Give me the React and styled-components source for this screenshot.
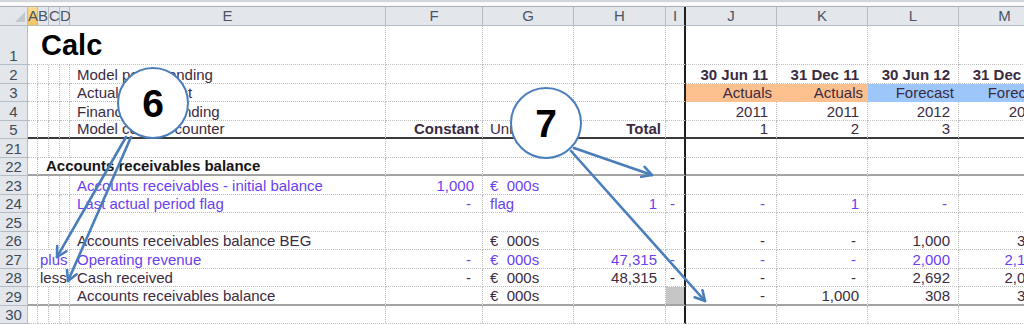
import React from 'react'
import styled, { createGlobalStyle } from 'styled-components'

const COLS = [28, 10, 11, 11, 10, 316, 97, 91, 92, 20, 91, 91, 91, 92]
const LETTERS = ['', 'A', 'B', 'C', 'D', 'E', 'F', 'G', 'H', 'I', 'J', 'K', 'L', 'M']
const TEMPLATE = COLS.map(w => w + 'px').join(' ')

const INK = '#3a2b3f'
const BLUE = '#6a3ff2'
const ORANGE = '#fcc08f'
const SKY = '#9dc6fb'
const ARROW = '#4a7ebb'

// little helpers so the row table stays readable
const label = (t, color = INK) => ({ c: 5, t, pad: 7, color })
const num = (c, t, color = INK) => ({ c, t, align: 'right', pad: 8, color })
const dash = (c, color = INK) => ({ c, t: '-', align: 'right', pad: 11, color })
const unit = (t, color = INK) => ({ c: 7, t, pad: 7, color })

const rows = [
  { n: 1, h: 39, cells: [{ c: 1, span: 5, t: 'Calc', pad: 13, big: true }] },
  { n: 2, cells: [
    label('Model period ending'),
    { ...num(10, '30 Jun 11'), bold: true }, { ...num(11, '31 Dec 11'), bold: true },
    { ...num(12, '30 Jun 12'), bold: true }, { ...num(13, '31 Dec 12'), bold: true },
  ] },
  { n: 3, cells: [
    label('Actuals / forecast'),
    { c: 10, t: 'Actuals', align: 'right', pad: 4, bg: ORANGE },
    { c: 11, t: 'Actuals', align: 'right', pad: 4, bg: ORANGE },
    { c: 12, t: 'Forecast', align: 'right', pad: 4, bg: SKY },
    { c: 13, t: 'Forecast', align: 'right', pad: 4, bg: SKY },
  ] },
  { n: 4, cells: [label('Financial year ending'), num(10, '2011'), num(11, '2011'), num(12, '2012'), num(13, '2012')] },
  { n: 5, rule: '#3a3a3a', cells: [
    label('Model column counter'),
    { c: 6, t: 'Constant', align: 'right', pad: 3, bold: true },
    unit('Units'),
    { c: 8, t: 'Total', align: 'right', pad: 4, bold: true },
    num(10, '1'), num(11, '2'), num(12, '3'), num(13, '4'),
  ] },
  { n: 21, cells: [] },
  { n: 22, rule: '#a3a3a3', cells: [{ c: 2, span: 4, t: 'Accounts receivables balance', pad: 8, bold: true, color: '#161616' }] },
  { n: 23, cells: [label('Accounts receivables - initial balance', BLUE), num(6, '1,000', BLUE), unit('€  000s', BLUE)] },
  { n: 24, cells: [
    label('Last actual period flag', BLUE), dash(6, BLUE), unit('flag', BLUE), num(8, '1', BLUE),
    { c: 9, t: '-', pad: 4, color: BLUE }, dash(10, BLUE), num(11, '1', BLUE), dash(12, BLUE), dash(13, BLUE),
  ] },
  { n: 25, cells: [] },
  { n: 26, cells: [label('Accounts receivables balance BEG'), unit('€  000s'), dash(10), dash(11), num(12, '1,000'), num(13, '308')] },
  { n: 27, cells: [
    { c: 2, span: 3, t: 'plus', pad: 2, color: BLUE },
    label('Operating revenue', BLUE), dash(6, BLUE), unit('€  000s', BLUE), num(8, '47,315', BLUE),
    { c: 9, t: '-', pad: 4, color: BLUE }, dash(10, BLUE), dash(11, BLUE), num(12, '2,000', BLUE), num(13, '2,100', BLUE),
  ] },
  { n: 28, cells: [
    { c: 2, span: 3, t: 'less', pad: 2 },
    label('Cash received'), dash(6), unit('€  000s'), num(8, '48,315'),
    { c: 9, t: '-', pad: 4 }, dash(10), dash(11), num(12, '2,692'), num(13, '2,092'),
  ] },
  { n: 29, rule: '#a3a3a3', cells: [
    label('Accounts receivables balance'), unit('€  000s'), { c: 9, t: '', bg: '#c6c6c6' },
    dash(10), num(11, '1,000'), num(12, '308'), num(13, '316'),
  ] },
  { n: 30, cells: [] },
]

function arrowHead(x1, y1, x2, y2, len = 11, spread = 0.5) {
  const a = Math.atan2(y2 - y1, x2 - x1)
  const p = s => `${x2 - len * Math.cos(a + s)},${y2 - len * Math.sin(a + s)}`
  return `${p(spread)} ${x2},${y2} ${p(-spread)}`
}

const arrows = [
  [126, 137, 57, 257],
  [131, 137, 68, 281],
  [574, 148, 652, 175],
  [571, 151, 705, 301],
]

export default function App() {
  return (
    <>
      <Global />
      <Page>
        <TopStrip />
        <Sheet>
          <HeaderRow>
            <Corner />
            {LETTERS.slice(1).map((l, i) => (
              <ColHead key={l} $selected={l === 'A'} $freeze={i + 1 === 9}>{l}</ColHead>
            ))}
          </HeaderRow>
          {rows.map((row, idx) => (
            <SheetRow key={row.n} row={row} h={row.h || (idx % 2 === 1 ? 19 : 18)} />
          ))}
        </Sheet>

        <Arrows width="1024" height="324" viewBox="0 0 1024 324">
          {arrows.map(([x1, y1, x2, y2], i) => (
            <g key={i}>
              <line x1={x1} y1={y1} x2={x2} y2={y2} />
              <polyline points={arrowHead(x1, y1, x2, y2)} />
            </g>
          ))}
        </Arrows>
        <Callout style={{ left: 117, top: 67 }}>6</Callout>
        <Callout style={{ left: 510, top: 87 }}>7</Callout>
      </Page>
    </>
  )
}

function SheetRow({ row, h }) {
  let out = []
  let col = 1
  while (col <= 13) {
    const cell = row.cells.find(c => c.c === col)
    const span = cell?.span || 1
    const last = col + span - 1
    out.push(
      <Cell
        key={col}
        $span={span}
        $freeze={last === 9}
        $rule={row.rule}
        $bg={cell?.bg}
        $align={cell?.align}
        $pad={cell?.pad || 0}
        $bold={cell?.bold}
        $big={cell?.big}
        $color={cell?.color}
      >
        {cell?.t}
      </Cell>
    )
    col += span
  }
  return (
    <Row $h={h}>
      <RowHead>{row.n}</RowHead>
      {out}
    </Row>
  )
}

const Global = createGlobalStyle`
  html, body {
    margin: 0;
    padding: 0;
    background: #ffffff;
    overflow: hidden;
  }
  body {
    font-family: "Liberation Sans", Arial, sans-serif;
  }
`

const Page = styled.div`
  position: relative;
  width: 1024px;
  height: 324px;
  overflow: hidden;
`

const TopStrip = styled.div`
  height: 7px;
  box-sizing: border-box;
  background: #fafafa;
  border-top: 2px solid #d3d6da;
  border-bottom: 1px solid #a9afb7;
`

const Sheet = styled.div`
  width: 1051px;
`

const HeaderRow = styled.div`
  display: grid;
  grid-template-columns: ${TEMPLATE};
  height: 19px;
`

const Corner = styled.div`
  position: relative;
  box-sizing: border-box;
  background: #e3e7ec;
  border-right: 1px solid #b6bcc5;
  border-bottom: 1px solid #b6bcc5;

  &::after {
    content: '';
    position: absolute;
    right: 2px;
    bottom: 3px;
    border-left: 10px solid transparent;
    border-bottom: 10px solid #c3c8cf;
  }
`

const ColHead = styled.div`
  box-sizing: border-box;
  background: ${p => p.$selected ? 'linear-gradient(#fadd94, #f3c45f)' : '#e3e7ec'};
  border-right: ${p => p.$freeze ? '2px solid #1e1e1e' : '1px solid #b6bcc5'};
  border-bottom: 1px solid #b6bcc5;
  color: #4b5566;
  font-size: 15px;
  line-height: 18px;
  text-align: center;
  overflow: visible;
  white-space: nowrap;
`

const Row = styled.div`
  display: grid;
  grid-template-columns: ${TEMPLATE};
  height: ${p => p.$h}px;
`

const RowHead = styled.div`
  box-sizing: border-box;
  background: #e3e7ec;
  border-right: 1px solid #b6bcc5;
  border-bottom: 1px solid #b6bcc5;
  color: #3f4a5a;
  font-size: 15px;
  line-height: 16px;
  display: flex;
  align-items: flex-end;
  justify-content: center;
`

const Cell = styled.div`
  grid-column: span ${p => p.$span};
  box-sizing: border-box;
  min-width: 0;
  background: ${p => p.$bg || 'transparent'};
  border-right: ${p => p.$freeze ? '2px solid #1e1e1e' : p.$bg ? '1px solid transparent' : '1px dotted #bdbdbd'};
  border-bottom: ${p => p.$rule ? `2px solid ${p.$rule}` : p.$bg ? '1px solid transparent' : '1px dotted #bdbdbd'};
  display: flex;
  align-items: flex-end;
  justify-content: ${p => p.$align === 'right' ? 'flex-end' : 'flex-start'};
  padding-left: ${p => p.$align === 'right' ? 0 : p.$pad}px;
  padding-right: ${p => p.$align === 'right' ? p.$pad : 0}px;
  padding-bottom: ${p => p.$big ? 2 : 1}px;
  color: ${p => p.$color || (p.$big ? '#000' : INK)};
  font-size: ${p => p.$big ? 29 : 15}px;
  font-weight: ${p => p.$bold || p.$big ? 700 : 400};
  line-height: ${p => p.$big ? 'normal' : '15px'};
  white-space: pre;
  overflow: visible;
`

const Arrows = styled.svg`
  position: absolute;
  left: 0;
  top: 0;
  pointer-events: none;

  line, polyline {
    fill: none;
    stroke: ${ARROW};
    stroke-width: 2.6;
    stroke-linecap: round;
    stroke-linejoin: round;
  }
`

const Callout = styled.div`
  position: absolute;
  width: 72px;
  height: 72px;
  box-sizing: border-box;
  border: 2.5px solid ${ARROW};
  border-radius: 50%;
  background: #ffffff;
  display: flex;
  align-items: center;
  justify-content: center;
  color: #000;
  font-size: 39px;
  font-weight: 700;
  line-height: 1;
`
